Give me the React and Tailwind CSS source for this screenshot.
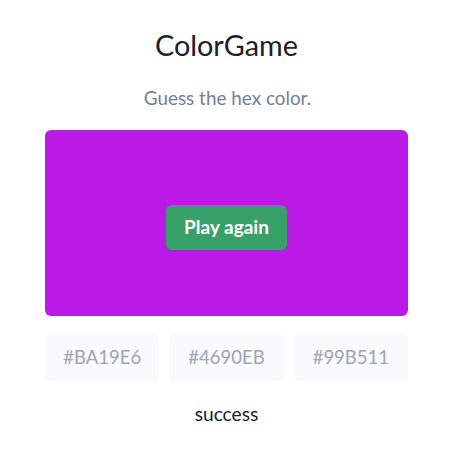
import React from "react";

const options = ["#BA19E6", "#4690EB", "#99B511"];

const App = () => {
  return (
    <div
      className="w-[460px] h-[456px] bg-white"
      style={{ fontFamily: "Lato, 'Open Sans', sans-serif" }}
    >
      <div className="ml-[45px] w-[363px] pt-[27px] flex flex-col items-center">
        <h1 className="text-[28.8px] leading-[36px] text-[#1a202c] font-normal">
          ColorGame
        </h1>
        <p className="mt-[21px] ml-[2px] text-[18.9px] leading-[28px] text-[#718096]">
          Guess the hex color.
        </p>
        <div className="mt-[18px] w-full h-[186px] rounded-md bg-[#ba19e6] flex justify-center">
          <button className="mt-[75px] w-[121px] h-[45px] rounded-md bg-[#38a169] text-white text-[19px] font-bold">
            Play again
          </button>
        </div>
        <div className="mt-[18px] w-full grid grid-cols-3 gap-[10px]">
          {options.map((hex) => (
            <button
              key={hex}
              disabled
              className="h-[47px] rounded-md bg-[#f8fafc] text-[18.5px] text-[#a0a4ad]"
            >
              {hex}
            </button>
          ))}
        </div>
        <p className="mt-[20px] text-[19.2px] leading-[26px] text-[#1a202c]">
          success
        </p>
      </div>
    </div>
  );
};

export default App;
